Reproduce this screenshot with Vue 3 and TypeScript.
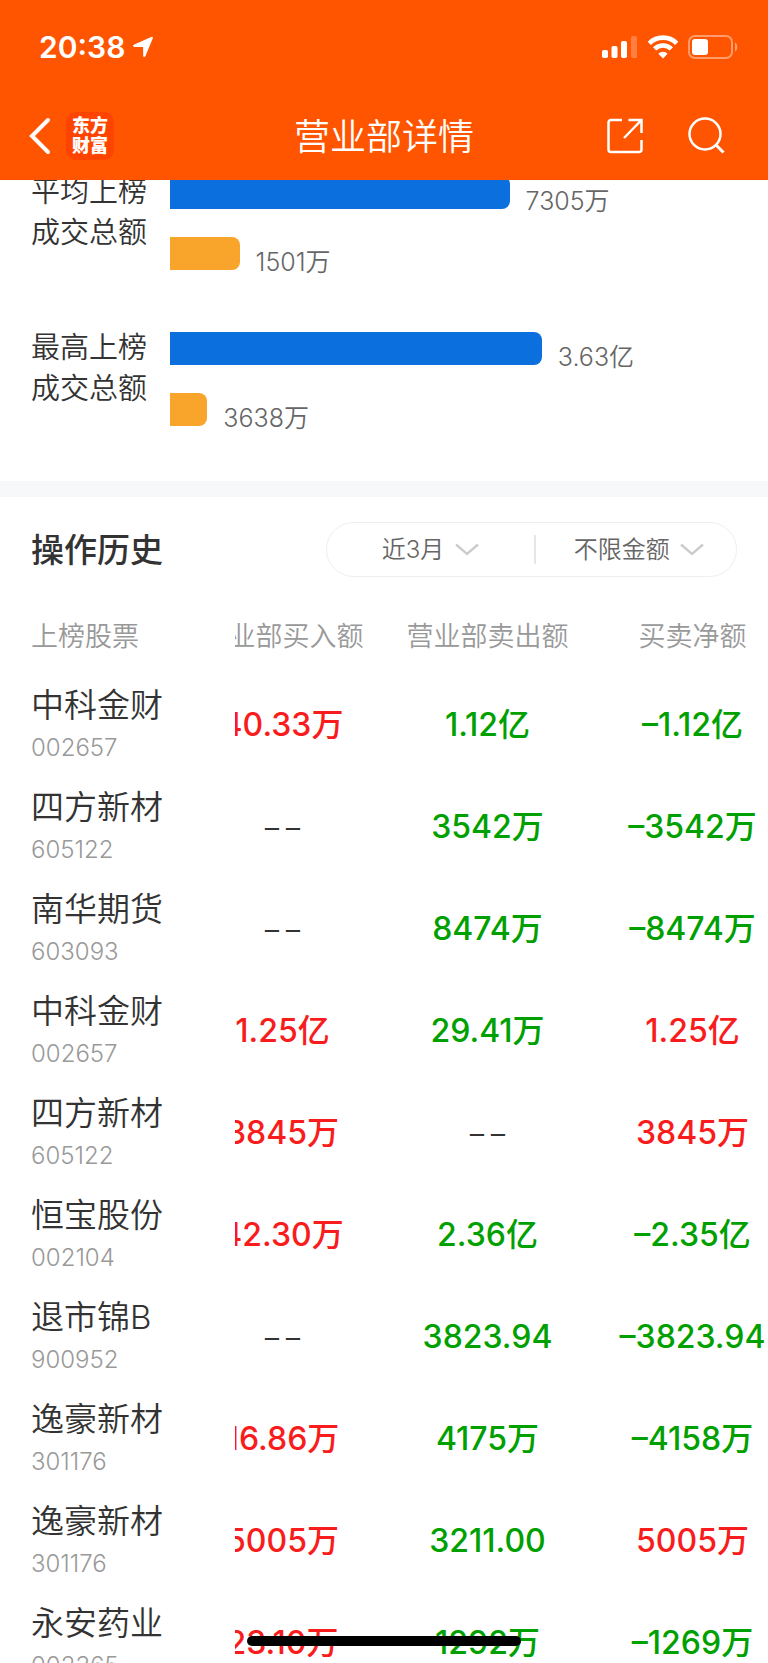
<script setup lang="ts">
import { onMounted, ref } from 'vue'

interface Bar { kind: 'buy' | 'sell'; share: number; text: string }
interface Group { label: [string, string]; bars: Bar[] }
interface Trade { name: string; code: string; buy: string; sell: string; net: string }

const groups: Group[] = [
  {
    label: ['平均上榜', '成交总额'],
    bars: [
      { kind: 'buy', share: 60, text: '7305万' },
      { kind: 'sell', share: 12.3, text: '1501万' },
    ],
  },
  {
    label: ['最高上榜', '成交总额'],
    bars: [
      { kind: 'buy', share: 65.7, text: '3.63亿' },
      { kind: 'sell', share: 6.6, text: '3638万' },
    ],
  },
]

const EMPTY = '−−'

const trades: Trade[] = [
  { name: '中科金财', code: '002657', buy: '40.33万', sell: '1.12亿', net: '–1.12亿' },
  { name: '四方新材', code: '605122', buy: EMPTY, sell: '3542万', net: '–3542万' },
  { name: '南华期货', code: '603093', buy: EMPTY, sell: '8474万', net: '–8474万' },
  { name: '中科金财', code: '002657', buy: '1.25亿', sell: '29.41万', net: '1.25亿' },
  { name: '四方新材', code: '605122', buy: '3845万', sell: EMPTY, net: '3845万' },
  { name: '恒宝股份', code: '002104', buy: '42.30万', sell: '2.36亿', net: '–2.35亿' },
  { name: '退市锦B', code: '900952', buy: EMPTY, sell: '3823.94', net: '–3823.94' },
  { name: '逸豪新材', code: '301176', buy: '16.86万', sell: '4175万', net: '–4158万' },
  { name: '逸豪新材', code: '301176', buy: '5005万', sell: '3211.00', net: '5005万' },
  { name: '永安药业', code: '002365', buy: '23.10万', sell: '1292万', net: '–1269万' },
]

const period = ref('近3月')
const amount = ref('不限金额')
const page = ref<HTMLElement | null>(null)
const sheet = ref<HTMLElement | null>(null)

const tone = (value: string, side: 'up' | 'down') => (value === EMPTY ? 'none' : side)
const netTone = (value: string) => (value.startsWith('–') ? 'down' : 'up')

onMounted(() => {
  if (page.value) page.value.scrollTop = 9
  if (sheet.value) sheet.value.scrollLeft = 55
})
</script>

<template>
  <div class="app">
    <header class="top">
      <div class="status">
        <div class="clock">
          <span>20:38</span>
          <svg width="22" height="22" viewBox="0 0 22 22" aria-hidden="true">
            <path d="M1.800 8.800 19.200 1c1.200-.5 2 .3 1.500 1.500L13.400 20.200c-.6 1.300-2.200 1-2.200-.5l-.1-8.700-8.800-.1c-1.500 0-1.800-1.500-.5-2.100z" fill="#fff" />
          </svg>
        </div>
        <div class="signals">
          <svg width="36" height="24" viewBox="0 0 36 24" aria-hidden="true">
            <g fill="#fff">
              <rect x="0" y="15" width="6" height="8" rx="1.800" />
              <rect x="9.500" y="11" width="6" height="12" rx="1.800" />
              <rect x="19" y="6" width="6" height="17" rx="1.800" />
              <rect x="29" y="1" width="6" height="22" rx="1.800" opacity=".25" />
            </g>
          </svg>
          <svg width="32" height="24" viewBox="0 0 32 24" aria-hidden="true">
            <g fill="none" stroke="#fff" stroke-width="4.600">
              <path d="M2.300 8.300a19.300 19.300 0 0 1 27.400 0" />
              <path d="M7.600 13.900a11.900 11.900 0 0 1 16.800 0" />
            </g>
            <path d="M11.400 18.700a6.500 6.500 0 0 1 9.200 0L16 23.500z" fill="#fff" />
          </svg>
          <svg width="50" height="24" viewBox="0 0 50 24" aria-hidden="true">
            <rect x="1" y="1" width="43" height="22" rx="6" fill="none" stroke="#fff" stroke-opacity=".42" stroke-width="2" />
            <rect x="4" y="4" width="16" height="16" rx="3" fill="#fff" />
            <path d="M47 7.500c3 1.500 3 7.500 0 9z" fill="#fff" fill-opacity=".45" />
          </svg>
        </div>
      </div>
      <nav class="nav">
        <div class="left">
          <button type="button" aria-label="返回">
            <svg width="22" height="38" viewBox="0 0 22 38" aria-hidden="true">
              <path d="M19 3 3 19l16 16" fill="none" stroke="#fff" stroke-width="4" stroke-linecap="round" stroke-linejoin="miter" />
            </svg>
          </button>
          <div class="logo"><span>东方</span><span>财富</span></div>
        </div>
        <h1>营业部详情</h1>
        <div class="right">
          <button type="button" aria-label="分享">
            <svg width="36" height="36" viewBox="0 0 36 36" aria-hidden="true">
              <path d="M15 2H4a2.500 2.500 0 0 0-2.500 2.500v27A2.500 2.500 0 0 0 4 34h28a2.500 2.500 0 0 0 2.500-2.500V22M21.500 2h13v13M34 2.500 17 20" fill="none" stroke="#fff" stroke-width="2.500" />
            </svg>
          </button>
          <button type="button" aria-label="搜索">
            <svg width="38" height="38" viewBox="0 0 38 38" aria-hidden="true">
              <circle cx="18" cy="17" r="15.500" fill="none" stroke="#fff" stroke-width="2.500" />
              <path d="m28.500 27.500 8 8" stroke="#fff" stroke-width="3" />
            </svg>
          </button>
        </div>
      </nav>
    </header>

    <main ref="page" class="page">
      <section class="chart">
        <div v-for="group in groups" :key="group.label[0]" class="group">
          <div class="label">
            <span>{{ group.label[0] }}</span>
            <span>{{ group.label[1] }}</span>
          </div>
          <div class="bars">
            <div v-for="bar in group.bars" :key="bar.kind" class="line">
              <div class="bar" :class="bar.kind" :style="{ width: bar.share + '%' }"></div>
              <span>{{ bar.text }}</span>
            </div>
          </div>
        </div>
      </section>

      <section class="history">
        <div class="head">
          <h2>操作历史</h2>
          <div class="filters">
            <label class="filter">
              <select v-model="period" aria-label="时间范围">
                <option>近3月</option>
              </select>
              <svg width="24" height="14" viewBox="0 0 24 14" aria-hidden="true">
                <path d="m1 1.500 11 9.500 11-9.500" fill="none" stroke="#ccc" stroke-width="2.400" />
              </svg>
            </label>
            <i class="rule"></i>
            <label class="filter">
              <select v-model="amount" aria-label="金额">
                <option>不限金额</option>
              </select>
              <svg width="24" height="14" viewBox="0 0 24 14" aria-hidden="true">
                <path d="m1 1.500 11 9.500 11-9.500" fill="none" stroke="#ccc" stroke-width="2.400" />
              </svg>
            </label>
          </div>
        </div>

        <div ref="sheet" class="sheet">
          <table>
            <thead>
              <tr>
                <th scope="col" class="stock">上榜股票</th>
                <th scope="col">营业部买入额</th>
                <th scope="col">营业部卖出额</th>
                <th scope="col">买卖净额</th>
              </tr>
            </thead>
            <tbody>
              <tr v-for="(trade, index) in trades" :key="index">
                <th scope="row" class="stock">
                  <span class="name">{{ trade.name }}</span>
                  <span class="code">{{ trade.code }}</span>
                </th>
                <td :class="tone(trade.buy, 'up')">{{ trade.buy }}</td>
                <td :class="tone(trade.sell, 'down')">{{ trade.sell }}</td>
                <td :class="netTone(trade.net)">{{ trade.net }}</td>
              </tr>
            </tbody>
          </table>
        </div>
      </section>
    </main>
    <div class="home"></div>
  </div>
</template>

<style>
body {
  margin: 0;
  background: #fff;
}
</style>

<style scoped>
.app {
  position: relative;
  display: flex;
  flex-direction: column;
  height: 100vh;
  overflow: hidden;
  background: #fff;
  color: #333;
  font-family: Inter, "Noto Sans CJK SC", sans-serif;
}

.app * {
  box-sizing: border-box;
}

button {
  display: flex;
  padding: 0;
  border: 0;
  background: none;
  cursor: pointer;
}

.top {
  flex: none;
  background: #ff5500;
  color: #fff;
}

.status {
  display: flex;
  align-items: center;
  justify-content: space-between;
  height: 94px;
  padding: 0 30px 0 39px;
}

.clock {
  display: flex;
  align-items: center;
  gap: 7px;
  font-size: 30px;
  font-weight: 600;
}

.signals {
  display: flex;
  align-items: center;
  gap: 9px;
}

.nav {
  display: grid;
  grid-template-columns: 1fr auto 1fr;
  align-items: center;
  height: 86px;
  padding: 0 43px 2px 29px;
}

.left,
.right {
  display: flex;
  align-items: center;
}

.left {
  gap: 15px;
}

.right {
  justify-content: flex-end;
  gap: 44px;
}

.logo {
  display: flex;
  flex-direction: column;
  align-items: center;
  justify-content: center;
  width: 48px;
  height: 48px;
  border-radius: 10px;
  background: #ff4400;
  font-size: 18px;
  font-weight: 900;
  line-height: 20px;
}

h1 {
  margin: 0;
  padding: 2px 0 0 14px;
  font-size: 36px;
  font-weight: 350;
  line-height: 48px;
}

.page {
  flex: 1;
  min-height: 0;
  overflow-x: hidden;
  overflow-y: auto;
  scrollbar-width: none;
}

.chart {
  display: flex;
  flex-direction: column;
  gap: 57px;
  padding: 0 32px 55px 31px;
}

.group {
  display: flex;
}

.label {
  display: flex;
  flex-direction: column;
  width: 139px;
  font-size: 29px;
  font-weight: 350;
  line-height: 41px;
  white-space: nowrap;
}

.bars {
  display: flex;
  flex: 1;
  flex-direction: column;
  gap: 28px;
  padding-top: 5px;
}

.line {
  display: flex;
  align-items: flex-end;
  gap: 16px;
  color: #666;
  font-size: 25px;
  font-weight: 350;
  line-height: 16px;
}

.bar {
  height: 33px;
  border-radius: 0 8px 8px 0;
}

.bar.buy {
  background: #0b6fdd;
}

.bar.sell {
  background: #f9a52c;
}

.history {
  padding-top: 25px;
  border-top: 16px solid #f7f8fa;
}

.head {
  display: flex;
  align-items: center;
  justify-content: space-between;
  padding: 0 31px;
}

h2 {
  margin: 0;
  font-size: 33px;
  font-weight: 500;
  line-height: 48px;
}

.filters {
  display: flex;
  align-items: center;
  width: 411px;
  height: 55px;
  padding-left: 6px;
  border: 1px solid #eee;
  border-radius: 28px;
}

.filter {
  display: flex;
  flex: 1;
  align-items: center;
  justify-content: center;
  gap: 10px;
  padding-right: 6px;
}

.rule + .filter {
  padding: 0 0 0 6px;
}

select {
  padding: 0;
  border: 0;
  appearance: none;
  background: none;
  color: #666;
  font: inherit;
  font-size: 24px;
  font-weight: 350;
  line-height: 40px;
}

.filter svg {
  pointer-events: none;
}

.rule {
  width: 2px;
  height: 29px;
  background: #e6e6e6;
}

.sheet {
  margin-top: 23px;
  overflow-x: auto;
  overflow-y: hidden;
  scrollbar-width: none;
}

table {
  width: 850px;
  min-width: 100%;
  border-spacing: 0;
  table-layout: fixed;
}

th,
td {
  padding: 0;
  text-align: center;
  white-space: nowrap;
}

thead th {
  height: 74px;
  color: #999;
  font-size: 27px;
  font-weight: 350;
  line-height: 40px;
}

.stock {
  position: sticky;
  left: 0;
  width: 235px;
  padding-left: 31px;
  background: #fff;
  font-weight: 350;
  text-align: left;
}

tbody tr {
  height: 102px;
}

.name,
.code {
  display: block;
}

.name {
  font-size: 33px;
  line-height: 46px;
}

.code {
  color: #999;
  font-size: 24px;
  line-height: 40px;
}

td {
  font-size: 32px;
  font-weight: 500;
  line-height: 46px;
}

.up {
  color: #f81c1c;
}

.down {
  color: #00a000;
}

.none {
  color: #333;
  font-weight: 300;
}

.home {
  position: absolute;
  bottom: 17px;
  left: 50%;
  width: 274px;
  height: 10px;
  margin-left: -137px;
  border-radius: 5px;
  background: #000;
}
</style>
